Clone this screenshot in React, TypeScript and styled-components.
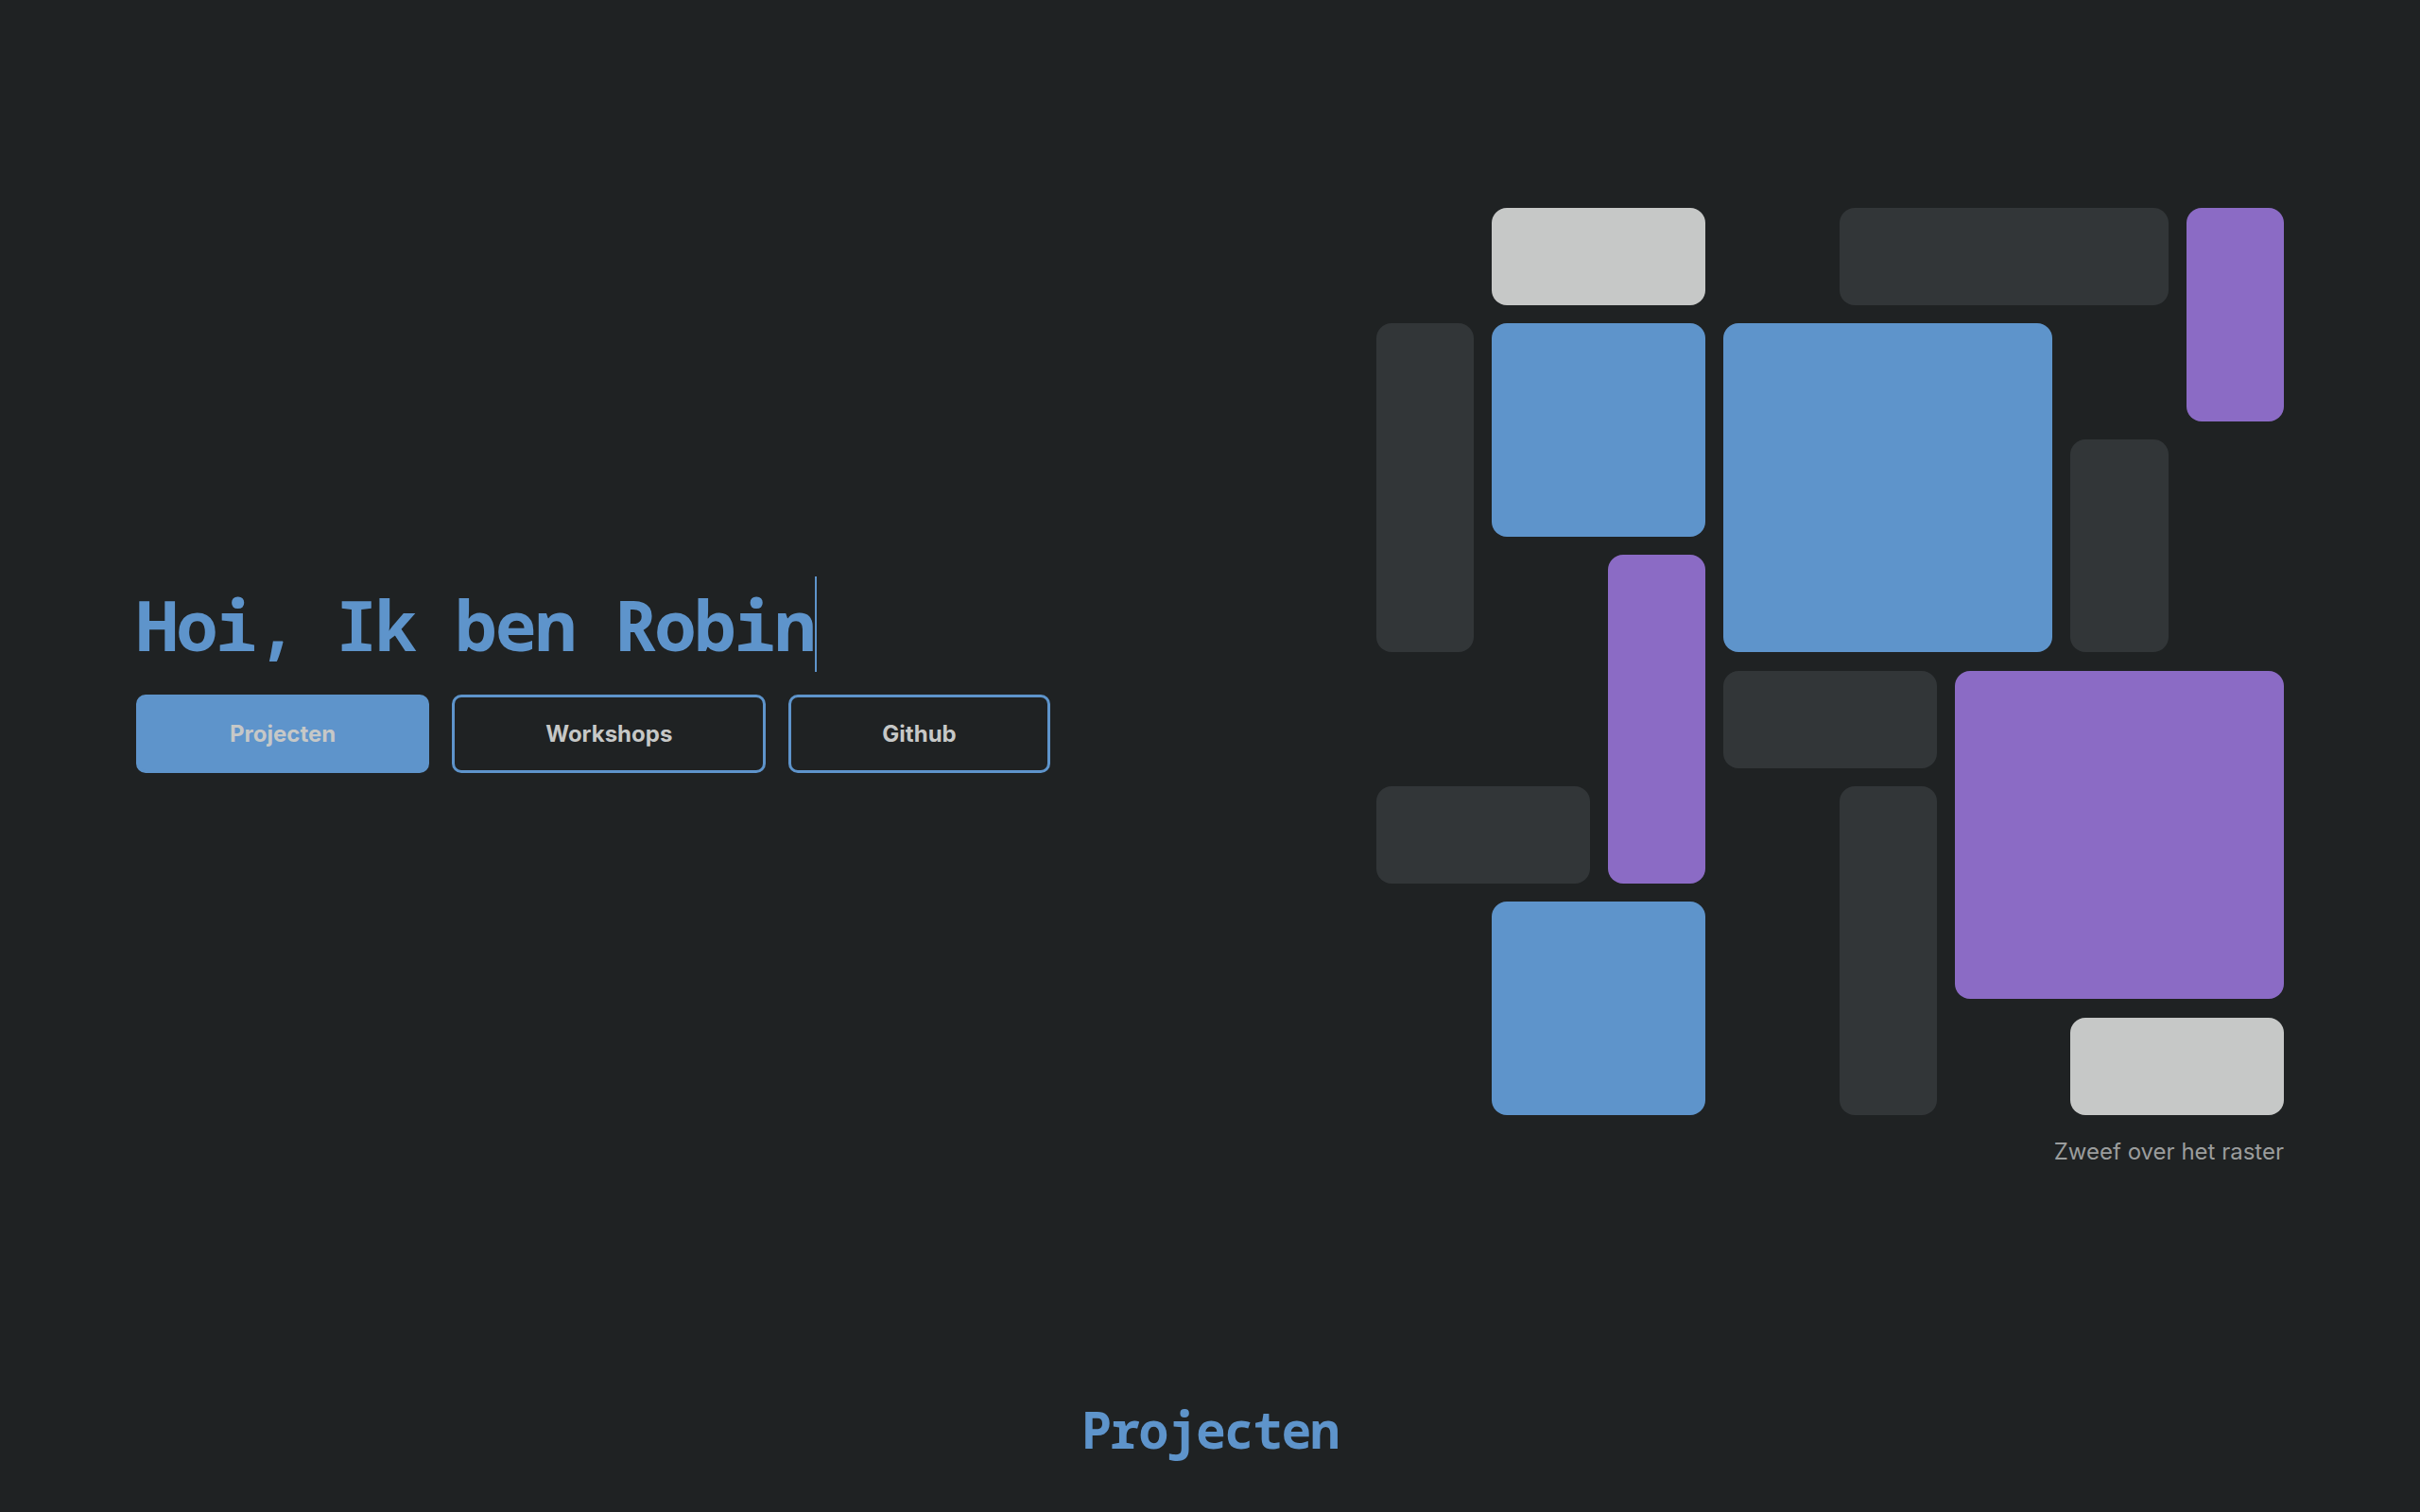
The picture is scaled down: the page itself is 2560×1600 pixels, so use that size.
import React from 'react';
import styled, { createGlobalStyle } from 'styled-components';

const GlobalStyle = createGlobalStyle`
  html, body {
    margin: 0;
    padding: 0;
    background: #1f2223;
  }
  body {
    font-family: Inter, "Noto Sans", sans-serif;
    color: #c6c8c7;
  }
  * {
    box-sizing: border-box;
  }
`;

const BLUE = '#5e94cb';
const PURPLE = '#8b6bc5';
const DARK = '#323638';
const LIGHT = '#c6c8c7';
const MONO = '"Noto Sans Mono", "DejaVu Sans Mono", "Liberation Mono", monospace';

type Tone = 'blue' | 'purple' | 'dark' | 'light';

const toneColor: Record<Tone, string> = {
  blue: BLUE,
  purple: PURPLE,
  dark: DARK,
  light: LIGHT
};

const Page = styled.main`
  min-height: 1600px;
`;

const Hero = styled.section`
  display: flex;
  align-items: center;
  justify-content: space-between;
  padding: 220px 144px 0;
`;

const Intro = styled.div`
  display: flex;
  flex-direction: column;
  align-items: flex-start;
  gap: 24px;
  margin-bottom: 24px;
`;

const Title = styled.h1`
  margin: 0;
  padding-right: 1px;
  font-family: ${MONO};
  font-weight: 700;
  font-size: 74px;
  letter-spacing: -0.03em;
  line-height: normal;
  color: ${BLUE};
  border-right: 2px solid ${BLUE};
  white-space: pre;
`;

const Actions = styled.nav`
  display: flex;
  gap: 24px;
`;

const Button = styled.a<{ $filled?: boolean }>`
  display: inline-flex;
  align-items: center;
  justify-content: center;
  padding: 24px 96px;
  border: 3px solid ${BLUE};
  border-radius: 10px;
  background: ${({ $filled }) => ($filled ? BLUE : 'transparent')};
  color: #c6c8c7;
  font-family: Inter, "Noto Sans", sans-serif;
  font-weight: 700;
  font-size: 24px;
  line-height: 29px;
  text-decoration: none;
  cursor: pointer;
`;

const Board = styled.div`
  display: flex;
  flex-direction: column;
  align-items: flex-end;
  gap: 24px;
`;

const Raster = styled.div`
  display: grid;
  width: 960px;
  grid-template-columns: repeat(8, 1fr);
  grid-template-rows: repeat(8, 103.2px);
  gap: 19.2px;
`;

const Tile = styled.div<{
  $col: number;
  $row: number;
  $w?: number;
  $h?: number;
  $tone: Tone;
}>`
  grid-column: ${({ $col, $w = 1 }) => `${$col} / span ${$w}`};
  grid-row: ${({ $row, $h = 1 }) => `${$row} / span ${$h}`};
  background: ${({ $tone }) => toneColor[$tone]};
  border-radius: 16px;
  transition: transform 0.2s ease;

  &:hover {
    transform: scale(1.03);
  }
`;

const Hint = styled.p`
  margin: 0;
  font-size: 24px;
  line-height: 29px;
  color: #9b9d9d;
`;

const Projects = styled.section`
  display: flex;
  justify-content: center;
  padding-top: 243px;
`;

const SectionTitle = styled.h2`
  margin: 0;
  font-family: ${MONO};
  font-weight: 700;
  font-size: 53px;
  letter-spacing: -0.03em;
  line-height: normal;
  color: ${BLUE};
`;

const tiles: { col: number; row: number; w?: number; h?: number; tone: Tone }[] = [
  { col: 2, row: 1, w: 2, tone: 'light' },
  { col: 5, row: 1, w: 3, tone: 'dark' },
  { col: 8, row: 1, h: 2, tone: 'purple' },
  { col: 1, row: 2, h: 3, tone: 'dark' },
  { col: 2, row: 2, w: 2, h: 2, tone: 'blue' },
  { col: 4, row: 2, w: 3, h: 3, tone: 'blue' },
  { col: 7, row: 3, h: 2, tone: 'dark' },
  { col: 3, row: 4, h: 3, tone: 'purple' },
  { col: 4, row: 5, w: 2, tone: 'dark' },
  { col: 6, row: 5, w: 3, h: 3, tone: 'purple' },
  { col: 1, row: 6, w: 2, tone: 'dark' },
  { col: 5, row: 6, h: 3, tone: 'dark' },
  { col: 2, row: 7, w: 2, h: 2, tone: 'blue' },
  { col: 7, row: 8, w: 2, tone: 'light' }
];

export default function App() {
  return (
    <>
      <GlobalStyle />
      <Page>
        <Hero>
          <Intro>
            <Title>Hoi, Ik ben Robin</Title>
            <Actions>
              <Button $filled>Projecten</Button>
              <Button>Workshops</Button>
              <Button>Github</Button>
            </Actions>
          </Intro>
          <Board>
            <Raster>
              {tiles.map((t, i) => (
                <Tile key={i} $col={t.col} $row={t.row} $w={t.w} $h={t.h} $tone={t.tone} />
              ))}
            </Raster>
            <Hint>Zweef over het raster</Hint>
          </Board>
        </Hero>
        <Projects>
          <SectionTitle>Projecten</SectionTitle>
        </Projects>
      </Page>
    </>
  );
}
